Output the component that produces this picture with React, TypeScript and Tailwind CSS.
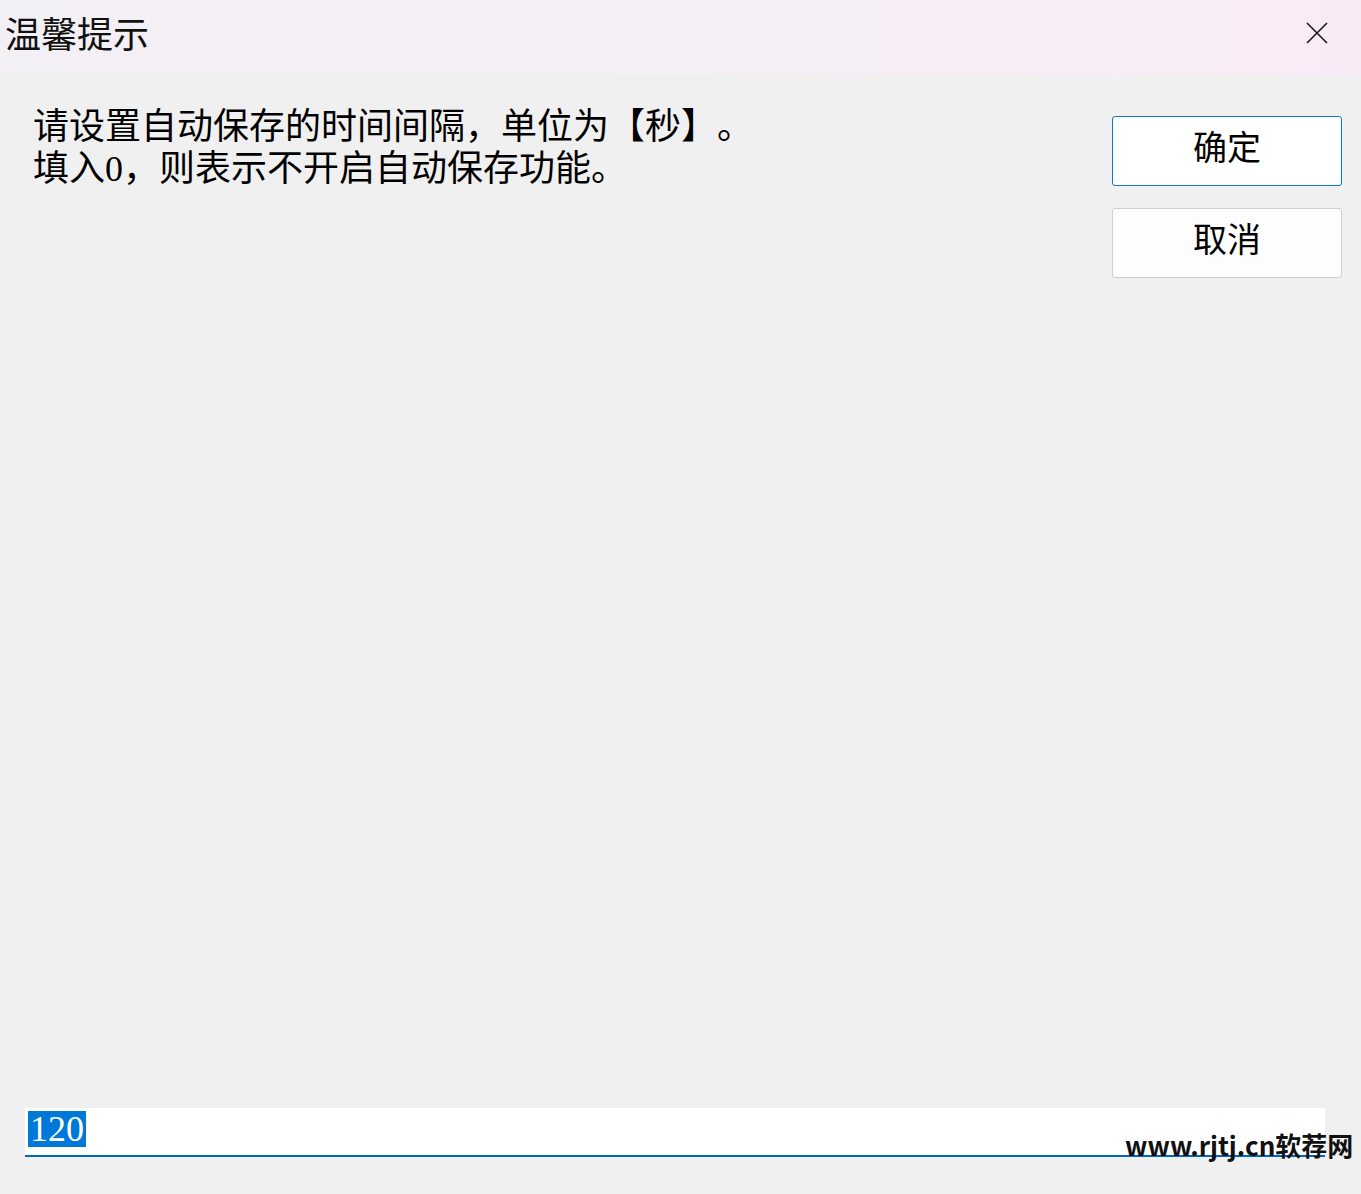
import React from "react";

const SERIF = { fontFamily: '"Liberation Serif", "Noto Sans CJK SC", serif' };

export default function App() {
  return (
    <div className="relative w-[1361px] h-[1194px] bg-[#f0f0f0] flex flex-col overflow-hidden [text-spacing-trim:space-all]">
      {/* Title bar */}
      <div className="h-[75px] flex items-center justify-between bg-gradient-to-r from-[#f3f0f5] via-[#f5eff6] to-[#f9ebf5]">
        <span className="pl-[5px] pb-[12px] text-[36px] text-[#111] font-['Noto_Sans_CJK_SC',sans-serif] leading-none">
          温馨提示
        </span>
        <button className="w-[60px] h-[60px] mr-[14px] mb-[10px] flex items-center justify-center">
          <svg width="22" height="22" viewBox="0 0 22 22" stroke="#1a1a1a" strokeWidth="1.6" fill="none">
            <path d="M1 1 L21 21 M21 1 L1 21" />
          </svg>
        </button>
      </div>

      {/* Body */}
      <div className="flex-1 flex justify-between pl-[33px] pr-[19px] pt-[31px]">
        <div className="text-[36px] leading-[42px] text-black" style={SERIF}>
          <p>请设置自动保存的时间间隔，单位为【秒】。</p>
          <p>填入0，则表示不开启自动保存功能。</p>
        </div>
        <div className="flex flex-col gap-[22px] pt-[10px]">
          <button
            className="w-[230px] h-[70px] bg-white border border-[#0a78d7] rounded-[3px] text-[34px] text-black flex items-center justify-center pb-[6px]"
            style={SERIF}
          >
            确定
          </button>
          <button
            className="w-[230px] h-[70px] bg-[#fdfdfd] border border-[#cfcfcf] rounded-[3px] text-[34px] text-black flex items-center justify-center pb-[6px]"
            style={SERIF}
          >
            取消
          </button>
        </div>
      </div>

      {/* Input */}
      <div className="pl-[25px] pr-[36px] pb-[37px]">
        <div className="h-[49px] bg-white border-b-2 border-[#0067c0] flex items-start pl-[3px] pt-[3px]">
          <span className="bg-[#0078d7] text-white text-[36px] leading-[36px] px-[2px]" style={SERIF}>
            120
          </span>
        </div>
      </div>

      {/* Watermark */}
      <div className="absolute left-[1125px] top-[1132px] text-[26px] font-bold text-[#111] leading-none font-['Noto_Sans_CJK_SC',sans-serif]">
        www.rjtj.cn软荐网
      </div>
    </div>
  );
}
